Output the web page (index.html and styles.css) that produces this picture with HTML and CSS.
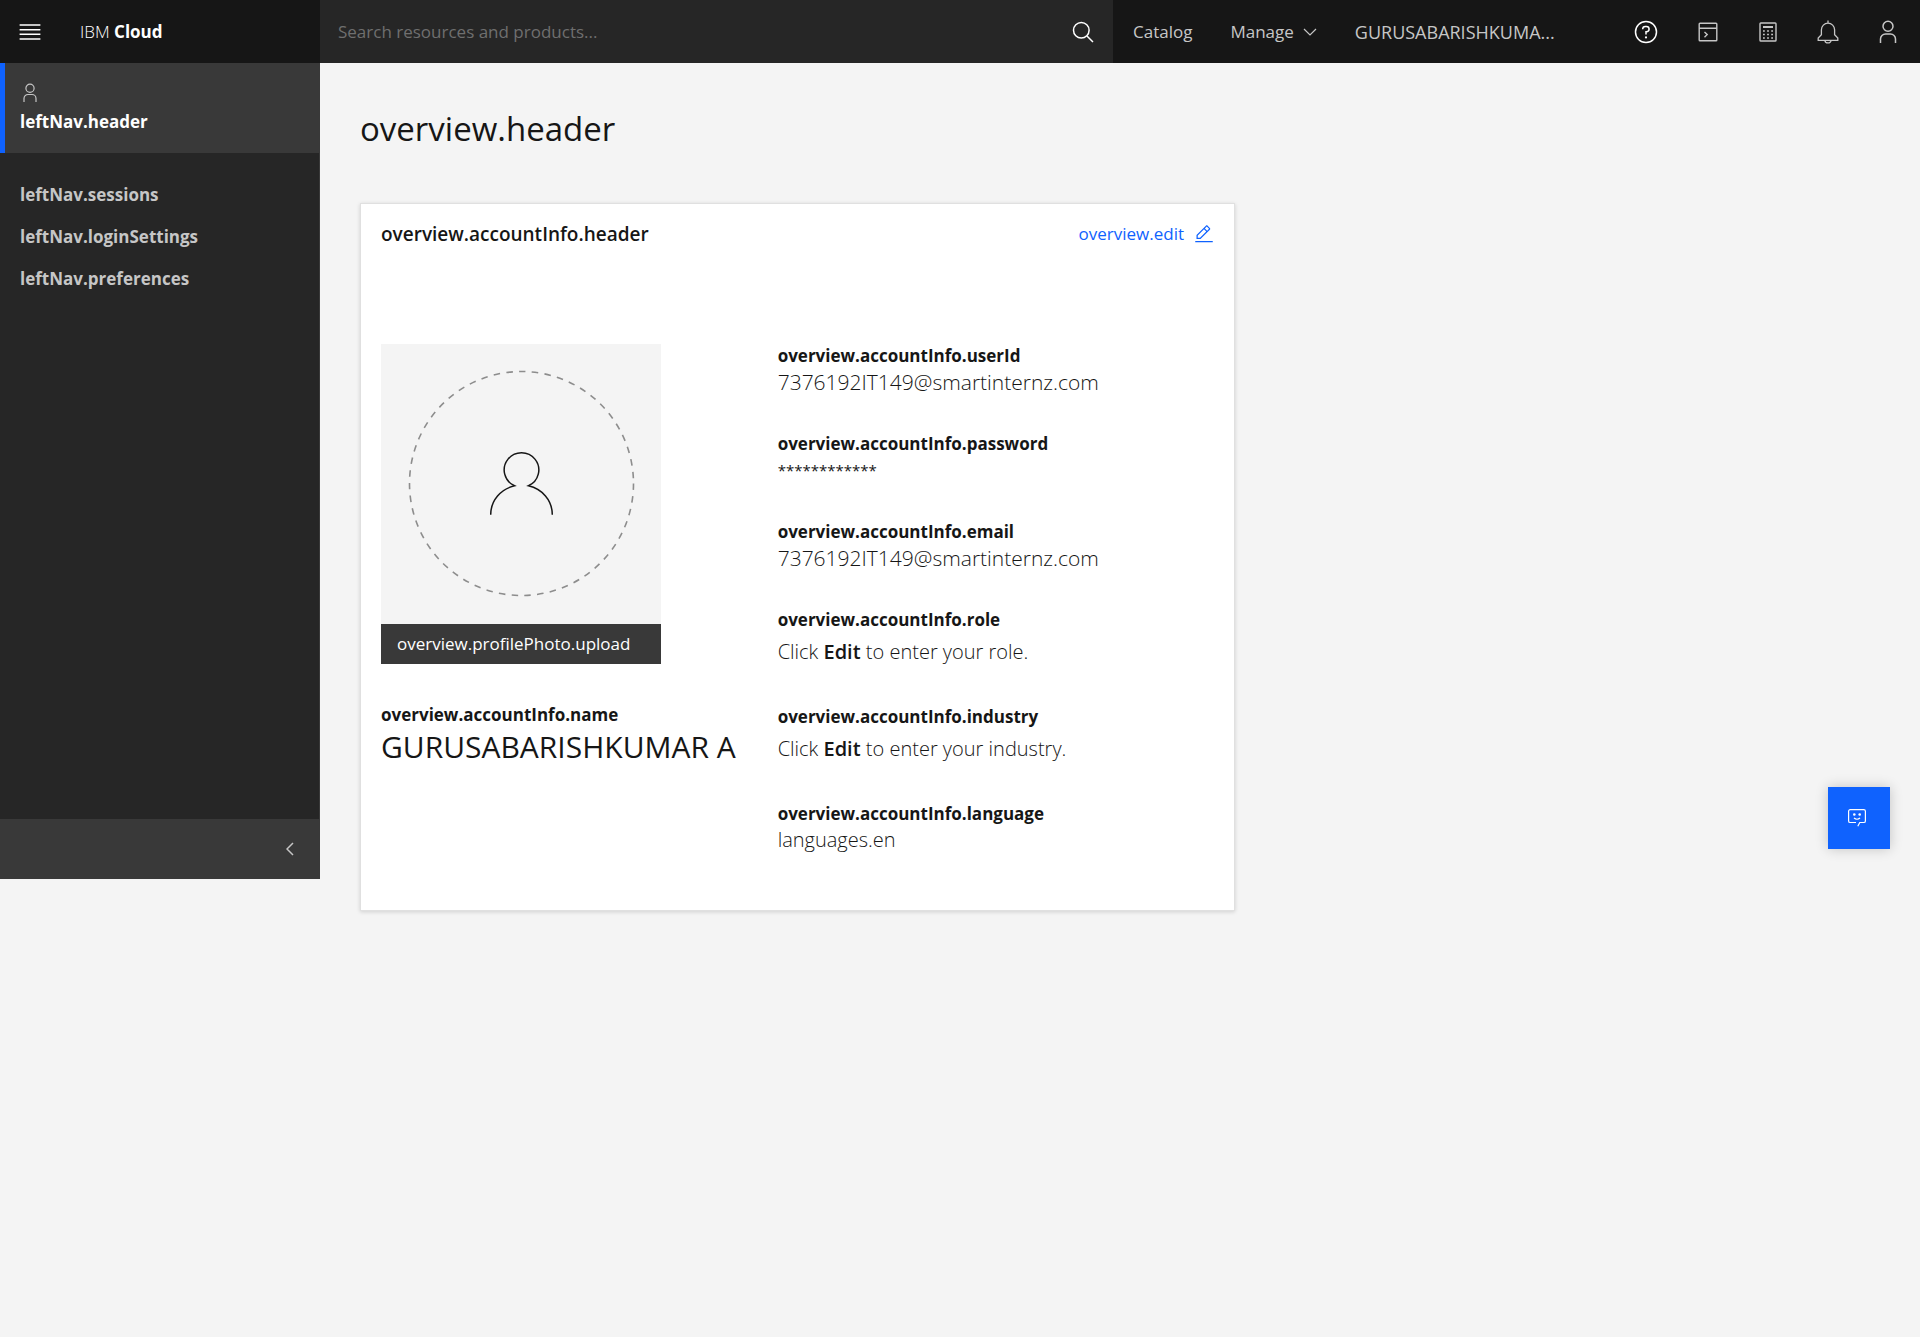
FILE: index.html
```html
<!DOCTYPE html>
<html lang="en">
<head>
<meta charset="utf-8">
<meta name="viewport" content="width=device-width, initial-scale=1">
<title>Profile - IBM Cloud</title>
<link rel="stylesheet" href="styles.css">
</head>
<body>
<header class="topbar">
  <div class="brand">
    <button class="menu-button" type="button" aria-label="Open menu">
      <svg width="26" height="26" viewBox="0 0 20 20" fill="currentColor"><path d="M2 14.8h16V16H2zM2 11.2h16v1.2H2zM2 7.6h16v1.2H2zM2 4h16v1.2H2z"/></svg>
    </button>
    <a class="logo" href="#">IBM <b>Cloud</b></a>
  </div>
  <form class="search">
    <input class="search-input" type="text" aria-label="Search resources and products" placeholder="Search resources and products...">
    <button class="search-button" type="button" aria-label="Search">
      <svg width="22" height="22" viewBox="0 0 22 22" fill="none" stroke="currentColor" stroke-width="1.5"><circle cx="9.3" cy="9.3" r="7.8"/><path d="M15 15l6 6"/></svg>
    </button>
  </form>
  <nav class="top-links" aria-label="Main">
    <a class="top-link" href="#">Catalog</a>
    <button class="top-link manage" type="button">Manage
      <svg width="14" height="8" viewBox="0 0 14 8" fill="none" stroke="currentColor" stroke-width="1.2"><path d="M1 1l6 6 6-6"/></svg>
    </button>
    <a class="top-link account" href="#">GURUSABARISHKUMA...</a>
  </nav>
  <div class="tools">
    <button class="tool active" type="button" aria-label="Help">
      <svg width="24" height="24" viewBox="0 0 24 24" fill="none" stroke="currentColor" stroke-width="1.5"><circle cx="12" cy="12" r="10.5"/><path d="M8.7 9.3V9a2.6 2.6 0 0 1 2.6-2.6h1.1a2.7 2.7 0 0 1 0 5.4H12v2.7"/><circle cx="12" cy="17.4" r="1.1" fill="currentColor" stroke="none"/></svg>
    </button>
    <button class="tool" type="button" aria-label="Shell">
      <svg width="20" height="20" viewBox="0 0 20 20" fill="none" stroke="currentColor" stroke-width="1.4"><rect x="1.2" y="1.2" width="17.6" height="17.6" rx=".8"/><path d="M1 6.2h18M6.5 10l2.7 2.6-2.7 2.6"/></svg>
    </button>
    <button class="tool" type="button" aria-label="Cost estimator">
      <svg width="18" height="20" viewBox="0 0 18 20" fill="none" stroke="currentColor" stroke-width="1.4"><rect x="1" y="1" width="16" height="18" rx=".8"/><path d="M4 5h10" stroke-width="2"/><path d="M4 9h10M4 12.5h10M4 16h10" stroke-width="1.6" stroke-dasharray="1.8 2.3"/></svg>
    </button>
    <button class="tool" type="button" aria-label="Notifications">
      <svg width="22" height="24" viewBox="0 0 22 24" fill="none" stroke="currentColor" stroke-width="1.3"><path d="M11 .5v3M11 3.2a6.6 6.6 0 0 0-6.6 6.6v4.9L1.2 18v2.3h19.6V18l-3.2-3.3V9.8A6.6 6.6 0 0 0 11 3.2zM8 20.4a3 2.5 0 0 0 6 0"/></svg>
    </button>
    <button class="tool" type="button" aria-label="Profile">
      <svg width="18" height="24" viewBox="0 0 18 24" fill="none" stroke="currentColor" stroke-width="1.5"><circle cx="9" cy="6.2" r="5"/><path d="M1.5 23v-4a5 5 0 0 1 5-5h5a5 5 0 0 1 5 5v4"/></svg>
    </button>
  </div>
</header>

<div class="shell">
  <nav class="sidebar" aria-label="Profile">
    <a class="side-head" href="#">
      <svg width="18" height="20" viewBox="0 0 18 20" fill="none" stroke="currentColor" stroke-width="1.2"><circle cx="9" cy="5.2" r="4.1"/><path d="M3 19v-3.5a4 4 0 0 1 4-4h4a4 4 0 0 1 4 4V19"/></svg>
      <span>leftNav.header</span>
    </a>
    <ul class="side-list">
      <li><a class="side-link" href="#">leftNav.sessions</a></li>
      <li><a class="side-link" href="#">leftNav.loginSettings</a></li>
      <li><a class="side-link" href="#">leftNav.preferences</a></li>
    </ul>
    <button class="side-toggle" type="button" aria-label="Collapse navigation">
      <svg width="8" height="14" viewBox="0 0 8 14" fill="none" stroke="currentColor" stroke-width="1.5"><path d="M7 1L1 7l6 6"/></svg>
    </button>
  </nav>

  <main class="content">
    <h1 class="page-title">overview.header</h1>
    <section class="card">
      <div class="card-head">
        <h2 class="card-title">overview.accountInfo.header</h2>
        <button class="edit" type="button">overview.edit
          <svg width="20" height="20" viewBox="0 0 32 32" fill="currentColor"><path d="M2 27h28v2H2zM25.4 9c.8-.8.8-2 0-2.8l-3.6-3.6c-.8-.8-2-.8-2.8 0l-15 15V24h6.4zm-5-5L24 7.6l-3 3L17.4 7zM6 22v-3.6l10-10 3.6 3.6-10 10z"/></svg>
        </button>
      </div>
      <div class="card-body">
        <div class="identity">
          <div class="photo">
            <svg width="280" height="280" viewBox="0 0 280 280" fill="none"><circle cx="140.5" cy="139.5" r="112" stroke="#8d8d8d" stroke-width="1.6" stroke-dasharray="6.5 6.3"/><path d="M109.7 170.8C109.7 156 120 145 133.5 141.8A17.3 17.3 0 1 1 147.5 141.8C161 145 171.3 156 171.3 170.8" stroke="#161616" stroke-width="1.5"/></svg>
            <button class="upload" type="button">overview.profilePhoto.upload</button>
          </div>
          <h3 class="label">overview.accountInfo.name</h3>
          <p class="name">GURUSABARISHKUMAR A</p>
        </div>
        <dl class="fields">
          <div class="field"><dt class="label">overview.accountInfo.userId</dt><dd class="value wide">7376192IT149@smartinternz.com</dd></div>
          <div class="field"><dt class="label">overview.accountInfo.password</dt><dd class="value mask">************</dd></div>
          <div class="field"><dt class="label">overview.accountInfo.email</dt><dd class="value wide">7376192IT149@smartinternz.com</dd></div>
          <div class="field hint"><dt class="label">overview.accountInfo.role</dt><dd class="value">Click <b>Edit</b> to enter your role.</dd></div>
          <div class="field hint"><dt class="label">overview.accountInfo.industry</dt><dd class="value">Click <b>Edit</b> to enter your industry.</dd></div>
          <div class="field"><dt class="label">overview.accountInfo.language</dt><dd class="value">languages.en</dd></div>
        </dl>
      </div>
    </section>
  </main>
</div>

<button class="chat" type="button" aria-label="Open chat">
  <svg width="20" height="20" viewBox="0 0 20 20" fill="none" stroke="currentColor" stroke-width="1.2"><path d="M9 14.5H3.2A1.6 1.6 0 0 1 1.6 12.9V3.2a1.6 1.6 0 0 1 1.6-1.6h13.6a1.6 1.6 0 0 1 1.6 1.6v9.7a1.6 1.6 0 0 1-1.6 1.6h-4l-2 3.7M7 10q3 2.5 6 0"/><circle cx="7.3" cy="6.5" r="1.3" fill="currentColor" stroke="none"/><circle cx="12.7" cy="6.5" r="1.3" fill="currentColor" stroke="none"/></svg>
</button>
</body>
</html>
```
FILE: styles.css
```css
* {
  box-sizing: border-box;
}

body {
  margin: 0;
  background: #f4f4f4;
  color: #161616;
  font: 400 17px/24px "Open Sans", "Noto Sans", sans-serif;
}

h1, h2, h3, p, dl, dd, ul {
  margin: 0;
  padding: 0;
}

ul {
  list-style: none;
}

a {
  color: inherit;
  text-decoration: none;
}

button {
  display: flex;
  align-items: center;
  justify-content: center;
  margin: 0;
  padding: 0;
  border: 0;
  background: none;
  color: inherit;
  font: inherit;
  cursor: pointer;
}

svg {
  display: block;
  flex: none;
}

/* Top bar */

.topbar {
  display: flex;
  height: 63px;
  background: #161616;
  color: #c6c6c6;
}

.brand {
  display: flex;
  align-items: center;
  flex: none;
  width: 320px;
  padding-left: 17px;
  gap: 37px;
  color: #fff;
}

.logo {
  font-weight: 300;
}

.logo b {
  font-weight: 700;
}

.search {
  display: flex;
  flex: 1;
  min-width: 0;
  background: #262626;
}

.search-input {
  flex: 1;
  min-width: 0;
  padding: 0 18px;
  border: 0;
  outline: 0;
  background: none;
  color: #f4f4f4;
  font: inherit;
}

.search-input::placeholder {
  color: #6f6f6f;
  opacity: 1;
}

.search-button {
  width: 60px;
  color: #fff;
}

.top-links {
  display: flex;
  flex: none;
  width: 501px;
  padding-left: 20px;
  gap: 38px;
}

.top-link {
  display: flex;
  align-items: center;
  gap: 9px;
}

.account {
  font-size: 18px;
}

.tools {
  display: flex;
  flex: none;
  padding-right: 2px;
}

.tool {
  width: 60px;
}

.tool.active {
  width: 64px;
  color: #fff;
}

/* Side navigation */

.shell {
  display: flex;
  align-items: flex-start;
}

.sidebar {
  display: flex;
  flex-direction: column;
  flex: none;
  width: 320px;
  min-height: 816px;
  background: #262626;
  border-right: 1px solid #393939;
  color: #c6c6c6;
  font-weight: 700;
}

.side-head {
  display: flex;
  flex-direction: column;
  gap: 7px;
  padding: 20px 15px 19px;
  margin-right: -1px;
  border-left: 5px solid #0f62fe;
  background: #393939;
}

.side-head svg {
  margin-left: 1px;
}

.side-head span {
  color: #fff;
}

.side-list {
  display: flex;
  flex: 1;
  flex-direction: column;
  gap: 18px;
  padding: 30px 20px;
}

.side-link {
  display: block;
}

.side-toggle {
  justify-content: flex-end;
  height: 60px;
  padding-right: 25px;
  background: #393939;
}

/* Content */

.content {
  flex: 1;
  min-width: 0;
  padding: 40px 40px 80px;
}

.page-title {
  font-size: 33px;
  font-weight: 400;
  line-height: 52px;
}

.card {
  max-width: 875px;
  margin-top: 48px;
  padding: 18px 20px 56px;
  border: 1px solid #e0e0e0;
  background: #fff;
  box-shadow: 0 1px 4px rgba(0, 0, 0, 0.15);
}

.card-head {
  display: flex;
  align-items: center;
  justify-content: space-between;
}

.card-title {
  font-size: 19px;
  font-weight: 600;
  line-height: 24px;
}

.edit {
  gap: 10px;
  color: #0f62fe;
}

.card-body {
  display: grid;
  grid-template-columns: 10fr 11fr;
  margin-top: 98px;
}

.identity,
.fields {
  min-width: 0;
}

.photo {
  width: 280px;
  margin-bottom: 39px;
  background: #f4f4f4;
}

.upload {
  justify-content: flex-start;
  width: 100%;
  height: 40px;
  padding-left: 16px;
  background: #393939;
  color: #fff;
}

.label {
  font-size: 17px;
  font-weight: 700;
  line-height: 24px;
}

.name {
  font-size: 30px;
  line-height: 40px;
  white-space: nowrap;
}

.field {
  margin-bottom: 36px;
}

.field:last-child {
  margin-bottom: 0;
}

.value {
  font-size: 20px;
  font-weight: 300;
  line-height: 28px;
}

.value b {
  font-weight: 600;
}

.wide {
  font-size: 21px;
}

.mask {
  font-size: 15px;
  font-weight: 400;
}

.hint {
  margin-bottom: 39px;
}

.hint .label {
  margin-bottom: 6px;
}

/* Chat launcher, floats over the page */

.chat {
  position: fixed;
  top: 787px;
  right: 30px;
  width: 62px;
  height: 62px;
  padding-right: 4px;
  background: #0f62fe;
  color: #fff;
  box-shadow: 0 0 12px rgba(0, 0, 0, 0.2);
}
```
